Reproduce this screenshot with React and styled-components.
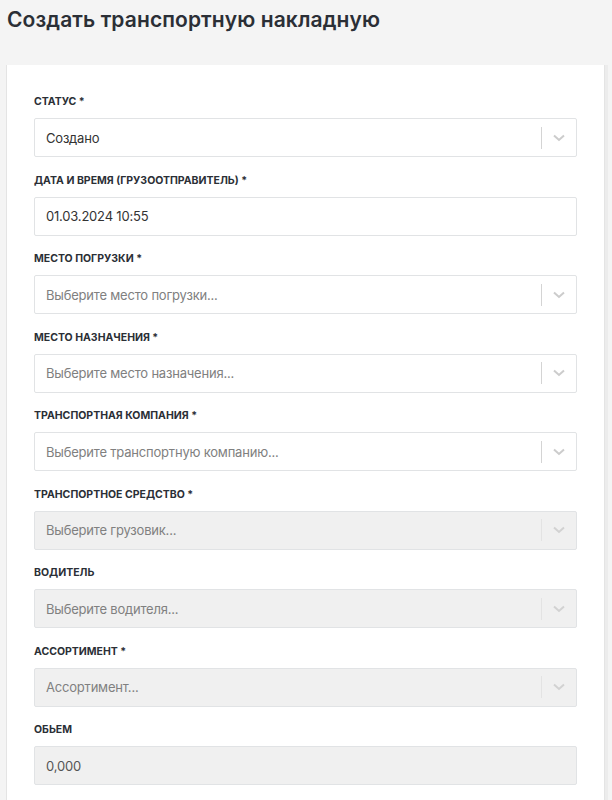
import React from "react";
import styled, { createGlobalStyle } from "styled-components";

const Global = createGlobalStyle`
  html, body { margin: 0; padding: 0; background: #f4f4f4; }
  body { font-family: Inter, "Noto Sans", sans-serif; -webkit-font-smoothing: antialiased; }
  * { box-sizing: border-box; }
`;

const Page = styled.div`
  padding: 0 0 0 6px;
  height: 800px;
  overflow: hidden;
`;

const Title = styled.h1`
  margin: 0;
  padding: 6px 0 0 1px;
  height: 65px;
  font-size: 21px;
  line-height: 28px;
  font-weight: 600;
  color: #2b2f36;
  letter-spacing: 0.1px;
`;

const Card = styled.div`
  background: #fff;
  border-left: 1px solid #e4e4e4;
  border-right: 1px solid #e4e4e4;
  width: 599px;
  padding: 29px 27px 20px 27px;
  box-shadow: 3px 0 0 #ececec;
`;

const Field = styled.div`
  display: flex;
  flex-direction: column;
  gap: 8px;
  margin-bottom: 15.5px;
`;

const Label = styled.label`
  font-size: 10.5px;
  line-height: 16px;
  font-weight: 700;
  color: #2b2f36;
  text-transform: uppercase;
`;

const Box = styled.div`
  display: flex;
  align-items: center;
  height: 39px;
  border: 1px solid #e1e3e5;
  border-radius: 2px;
  background: ${(p) => (p.$disabled ? "#f0f0f0" : "#fff")};
  padding-left: 11px;
  font-size: 13px;
  letter-spacing: -0.2px;
  color: ${(p) => (p.$placeholder ? "#808080" : p.$disabled ? "#555" : "#333")};
`;

const Value = styled.span`
  flex: 1;
  white-space: nowrap;
  overflow: hidden;
`;

const Indicators = styled.div`
  display: flex;
  align-items: center;
  height: 100%;
`;

const Sep = styled.span`
  width: 1px;
  height: 22px;
  background: ${(p) => (p.$disabled ? "#e3e3e3" : "#d4d4d4")};
`;

const Chevron = styled.div`
  width: 34px;
  display: flex;
  justify-content: center;
  align-items: center;
  color: ${(p) => (p.$disabled ? "#d2d2d2" : "#cccccc")};
`;

const Arrow = ({ disabled }) => (
  <Chevron $disabled={disabled}>
    <svg width="12" height="8" viewBox="0 0 12 8">
      <path d="M1 1.5 L6 6 L11 1.5" fill="none" stroke="currentColor" strokeWidth="2" />
    </svg>
  </Chevron>
);

const SelectField = ({ label, required, value, placeholder, disabled }) => (
  <Field>
    <Label>
      {label}
      {required ? " *" : ""}
    </Label>
    <Box $disabled={disabled} $placeholder={!value}>
      <Value>{value || placeholder}</Value>
      <Indicators>
        <Sep $disabled={disabled} />
        <Arrow disabled={disabled} />
      </Indicators>
    </Box>
  </Field>
);

const InputField = ({ label, required, value, disabled }) => (
  <Field>
    <Label>
      {label}
      {required ? " *" : ""}
    </Label>
    <Box $disabled={disabled}>
      <Value>{value}</Value>
    </Box>
  </Field>
);

export default function App() {
  return (
    <>
      <Global />
      <Page>
        <Title>Создать транспортную накладную</Title>
        <Card>
          <SelectField label="Статус" required value="Создано" />
          <InputField label="Дата и время (грузоотправитель)" required value="01.03.2024 10:55" />
          <SelectField label="Место погрузки" required placeholder="Выберите место погрузки..." />
          <SelectField label="Место назначения" required placeholder="Выберите место назначения..." />
          <SelectField label="Транспортная компания" required placeholder="Выберите транспортную компанию..." />
          <SelectField label="Транспортное средство" required placeholder="Выберите грузовик..." disabled />
          <SelectField label="Водитель" placeholder="Выберите водителя..." disabled />
          <SelectField label="Ассортимент" required placeholder="Ассортимент..." disabled />
          <InputField label="Обьем" value="0,000" disabled />
        </Card>
      </Page>
    </>
  );
}
